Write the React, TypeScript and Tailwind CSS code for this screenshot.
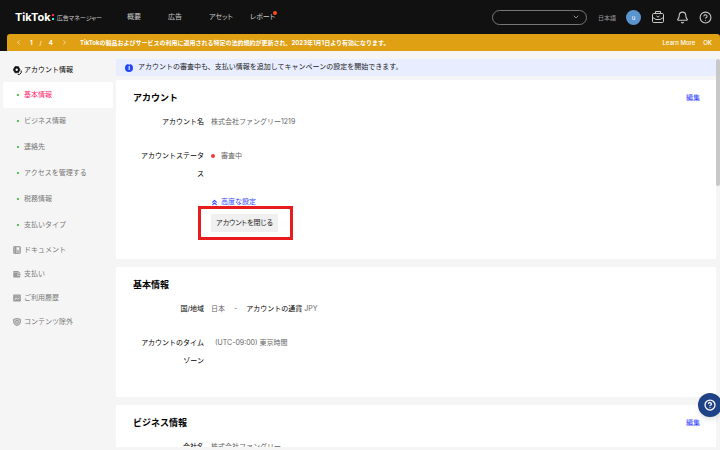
import type { ReactNode } from "react";
import {
  Bell,
  ChevronDown,
  ChevronLeft,
  ChevronRight,
  ChevronsUp,
  CircleHelp,
} from "lucide-react";

const navItems = [
  { label: "概要", dot: false },
  { label: "広告", dot: false },
  { label: "アセット", dot: false },
  { label: "レポート", dot: true },
];

const accountItems = [
  "基本情報",
  "ビジネス情報",
  "連絡先",
  "アクセスを管理する",
  "税務情報",
  "支払いタイプ",
];

function BriefcaseIcon() {
  return (
    <svg
      viewBox="0 0 14 14"
      className="size-[14px]"
      fill="none"
      stroke="currentColor"
      strokeWidth="1"
    >
      <rect x="1.500" y="3.500" width="11" height="9" rx="1.200" />
      <path d="M4.500 3.500V1.500h5v2M1.500 7.500l3.500 2h4l3.500-2" />
      <path d="m5.500 6 1.500 1.200L8.500 6" />
    </svg>
  );
}

function AccountIcon() {
  return (
    <svg viewBox="0 0 9 9" className="size-[9px]">
      <path
        d="M2 .6h3.400L7 3.600 5.400 6.800H2L.2 3.700Z"
        fill="#111"
        stroke="#111"
        strokeWidth=".6"
        strokeLinejoin="round"
      />
      <circle cx="3.700" cy="3.700" r="1.200" fill="#f5f5f5" />
      <path d="M8.200 4.500v2.300L6.600 8.400H4.800" fill="none" stroke="#111" />
    </svg>
  );
}

function DocumentIcon() {
  return (
    <svg viewBox="0 0 8 8" className="size-2">
      <rect x=".5" y=".5" width="7" height="7" rx=".8" fill="#bbb" stroke="#999" strokeWidth=".8" />
      <path d="M2.300.5v7" stroke="#888" strokeWidth=".8" />
      <path d="M3.800 1.500h2.200v2.800l-1.100-.8-1.100.8Z" fill="#f5f5f5" />
    </svg>
  );
}

function WalletIcon() {
  return (
    <svg viewBox="0 0 8 8" className="size-2">
      <path d="M.3 1h5.400v1.200h1.500v5.300H.3Z" fill="#999" />
      <path d="M.3 2.600h6" stroke="#ddd" strokeWidth=".5" />
      <rect x="4.800" y="3.800" width="3" height="2" fill="#999" stroke="#f5f5f5" strokeWidth=".5" />
    </svg>
  );
}

function HistoryIcon() {
  return (
    <svg viewBox="0 0 8 8" className="size-2">
      <rect x=".2" y=".5" width="7.600" height="7" rx=".6" fill="#999" />
      <path d="M1 2h6" stroke="#ccc" strokeWidth=".5" />
      <path d="m1.500 6.200 1.700-2.400 1.500 1.600L6.500 3.500" fill="none" stroke="#f5f5f5" strokeWidth=".8" />
    </svg>
  );
}

function ShieldIcon() {
  return (
    <svg viewBox="0 0 8 8" className="size-2" fill="none" stroke="#888">
      <path d="M.6 1.200 4 .5l3.400.7v3Q7.200 6.700 4 7.600.8 6.700.6 4.200Z" strokeWidth=".8" fill="#ccc" />
      <circle cx="4" cy="3.800" r="1.500" fill="#f5f5f5" strokeWidth=".8" />
      <path d="M3.200 3.800h1.600" strokeWidth=".7" />
    </svg>
  );
}

const sectionItems = [
  { label: "ドキュメント", icon: <DocumentIcon /> },
  { label: "支払い", icon: <WalletIcon /> },
  { label: "ご利用履歴", icon: <HistoryIcon /> },
  { label: "コンテンツ除外", icon: <ShieldIcon /> },
];

function Header() {
  return (
    <header className="flex h-[34px] shrink-0 items-center pl-[15px] pr-2 text-[7px] text-[#c9c9c9]">
      <a href="#" className="flex w-28 items-center gap-[3px] whitespace-nowrap">
        <span className="flex items-center text-[11px] font-bold text-white">
          TikTok
          <span className="ml-px flex flex-col gap-[2px]">
            <span className="size-[2px] bg-[#fe2c55]" />
            <span className="size-[2px] bg-[#25f4ee]" />
          </span>
        </span>
        <span className="text-[6px] [font-feature-settings:'palt']">広告マネージャー</span>
      </a>
      <nav className="flex whitespace-nowrap [font-feature-settings:'palt']">
        {navItems.map((item) => (
          <a key={item.label} href="#" className="w-[41px]">
            <span className="relative">
              {item.label}
              {item.dot && (
                <span className="absolute -right-[2px] -top-px size-1 rounded-full bg-[#ff4a11]" />
              )}
            </span>
          </a>
        ))}
      </nav>
      <div className="ml-auto flex items-center">
        <button
          aria-label="アカウントを選択"
          className="flex h-[15px] w-[95px] items-center justify-end rounded-full border border-[#777] pr-[6px]"
        >
          <ChevronDown className="size-2" strokeWidth={2} />
        </button>
        <span className="ml-[11px] text-[6px] text-[#999]">日本語</span>
        <span className="ml-[10px] flex size-[15px] items-center justify-center rounded-full bg-[#5b95d0] text-[6px] text-white">
          u
        </span>
        <button aria-label="ビジネスセンター" className="ml-[10px]">
          <BriefcaseIcon />
        </button>
        <button aria-label="通知" className="ml-[11px]">
          <Bell className="size-[13px]" strokeWidth={2} />
        </button>
        <button aria-label="ヘルプ" className="ml-[10px]">
          <CircleHelp className="size-[13px]" strokeWidth={2} />
        </button>
      </div>
    </header>
  );
}

function Announcement() {
  return (
    <div className="ml-[7px] flex h-[17px] shrink-0 items-center rounded-t-[3px] bg-[#e0a013] px-2 text-[6px] font-bold text-white">
      <div className="flex w-[65px] items-center">
        <button aria-label="前へ">
          <ChevronLeft className="size-[7px]" strokeWidth={2} />
        </button>
        <span className="ml-2">1</span>
        <span className="mx-[7px] font-normal">/</span>
        <span>4</span>
        <button aria-label="次へ" className="ml-2">
          <ChevronRight className="size-[7px]" strokeWidth={2} />
        </button>
      </div>
      <p className="truncate">
        TikTokの製品およびサービスの利用に適用される特定の法的規約が更新され、2023年1月1日より有効になります。
      </p>
      <a href="#" className="ml-auto whitespace-nowrap font-medium">
        Learn More
      </a>
      <button className="ml-2 font-medium">OK</button>
    </div>
  );
}

function Sidebar() {
  return (
    <aside className="w-[116px] shrink-0 px-[3px] pt-[7px] text-[#777]">
      <div className="flex h-6 items-center gap-[2px] pl-[10px] text-black">
        <AccountIcon />
        アカウント情報
      </div>
      {accountItems.map((item, index) => (
        <a
          key={item}
          href="#"
          className={`flex h-[26px] items-center gap-1 rounded-[2px] pl-[14px] ${
            index === 0 ? "bg-white text-[#fe1e6a]" : ""
          }`}
        >
          <span className="mr-px size-[2px] rounded-full bg-[#1db81d]" />
          {item}
        </a>
      ))}
      {sectionItems.map((item) => (
        <a key={item.label} href="#" className="flex h-6 items-center gap-[3px] pl-[10px]">
          {item.icon}
          {item.label}
        </a>
      ))}
    </aside>
  );
}

type CardProps = { title: string; editable?: boolean; children: ReactNode };

function Card({ title, editable, children }: CardProps) {
  return (
    <section className="shrink-0 rounded-[2px] bg-white pb-[27px] pl-[17px] pr-4 pt-[9px]">
      <div className="mb-[6px] flex justify-between leading-[18px]">
        <h2 className="text-[9px] font-bold text-black">{title}</h2>
        {editable && (
          <a href="#" className="text-[#3347ff]">
            編集
          </a>
        )}
      </div>
      <div className="flex flex-col gap-4">{children}</div>
    </section>
  );
}

function Field({ label, children }: { label: string; children: ReactNode }) {
  return (
    <div className="flex gap-[7px] leading-[18px]">
      <div className="w-[71px] shrink-0 pl-[6px] text-right text-black">{label}</div>
      <div className="text-[#666]">{children}</div>
    </div>
  );
}

function App() {
  return (
    <div className="flex h-screen flex-col overflow-hidden bg-[#f5f5f5] font-['Inter','Noto_Sans_CJK_JP',sans-serif] text-[7px]">
      <div className="flex shrink-0 flex-col bg-[#111]">
        <Header />
        <Announcement />
      </div>
      <div className="flex min-h-0 flex-1">
        <Sidebar />
        <div className="relative min-w-0 flex-1 pb-[3px] pr-1 pt-2">
          <main className="flex h-full flex-col gap-2 overflow-hidden">
            <div className="flex shrink-0 flex-col gap-1">
              <div className="flex h-[17px] items-center gap-[5px] bg-[#e8eeff] pl-[9px] text-[#222]">
                <span className="flex size-2 items-center justify-center rounded-full bg-[#2447f5] text-[6px] font-bold text-white">
                  i
                </span>
                アカウントの審査中も、支払い情報を追加してキャンペーンの設定を開始できます。
              </div>
              <Card title="アカウント" editable>
                <Field label="アカウント名">株式会社ファングリー1219</Field>
                <Field label="アカウントステータス">
                  <span className="flex items-center gap-[6px]">
                    <span className="size-1 rounded-full bg-[#f5373c]" />
                    審査中
                  </span>
                </Field>
                <div className="-mt-[6px] ml-[78px] flex flex-col items-start gap-[3px]">
                  <button className="flex h-[18px] items-center gap-[3px] text-[#3347ff]">
                    <ChevronsUp className="size-[7px] scale-125" strokeWidth={3} />
                    高度な設定
                  </button>
                  <div className="relative">
                    <button className="h-[18px] w-[67px] whitespace-nowrap rounded-[1px] bg-[#f0f0f0] text-[#222] [font-feature-settings:'palt']">
                      アカウントを閉じる
                    </button>
                    <span className="pointer-events-none absolute -bottom-2 -left-[13px] -right-[15px] -top-2 border-3 border-[#e81c1c]" />
                  </div>
                </div>
              </Card>
            </div>
            <Card title="基本情報">
              <Field label="国/地域">
                日本<span className="mx-[9px]">-</span>
                <span className="text-black">アカウントの通貨</span> JPY
              </Field>
              <Field label="アカウントのタイムゾーン">
                <span className="ml-1">(UTC-09:00) 東京時間</span>
              </Field>
            </Card>
            <Card title="ビジネス情報" editable>
              <Field label="会社名">株式会社ファングリー</Field>
            </Card>
          </main>
          <div className="absolute right-0 top-2 h-[127px] w-1 rounded-full bg-[#c8c8c8]" />
        </div>
      </div>
      <button
        aria-label="サポート"
        className="fixed -right-[2px] bottom-[33px] flex size-6 items-center justify-center rounded-full bg-[#1f4287] text-white shadow-md"
      >
        <CircleHelp className="size-3" strokeWidth={2.5} />
      </button>
    </div>
  );
}

export default App;
